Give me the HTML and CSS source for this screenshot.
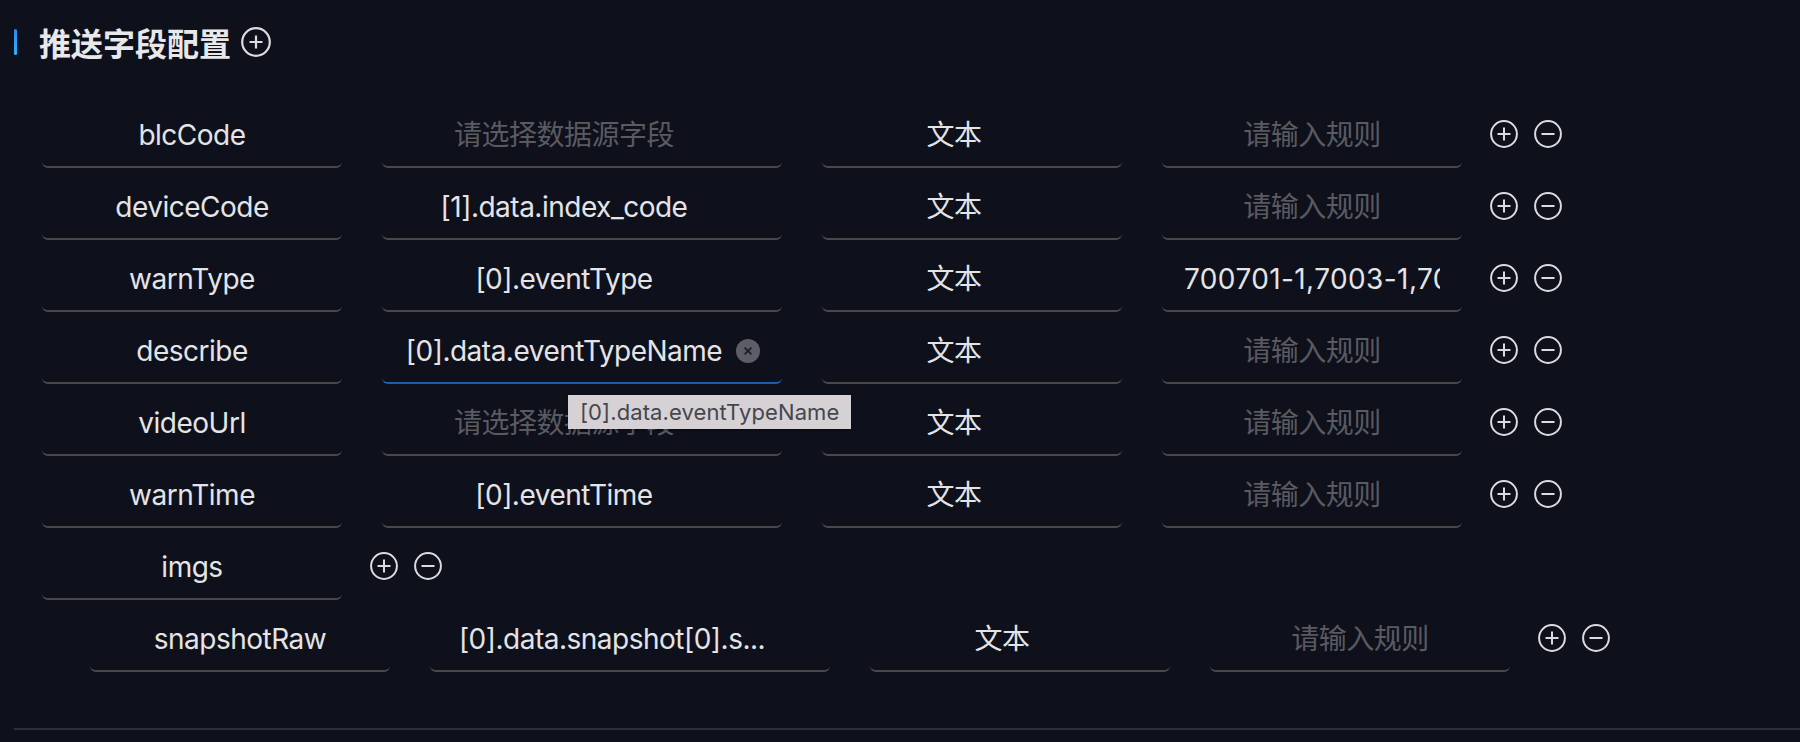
FILE: index.html
```html
<!DOCTYPE html>
<html lang="zh-CN">
<head>
<meta charset="utf-8">
<title>推送字段配置</title>
<link rel="stylesheet" href="styles.css">
</head>
<body>
<div class="page">
  <div class="header">
    <span class="bar"></span>
    <h2 class="title">推送字段配置</h2>
    <svg class="icon icon--title" viewBox="0 0 30 30"><circle cx="15" cy="15" r="13.8" fill="none" stroke="currentColor" stroke-width="2.2"/><path d="M15 8.5v13M8.5 15h13" stroke="currentColor" stroke-width="2.2" fill="none"/></svg>
  </div>

  <div class="rows">
    <div class="row">
      <div class="cell cell--key"><span class="val">blcCode</span></div>
      <div class="cell cell--src cell--suffix"><span class="val ph">请选择数据源字段</span><span class="sfx"></span></div>
      <div class="cell cell--type cell--suffix"><span class="val">文本</span><span class="sfx"></span></div>
      <div class="cell cell--rule"><span class="val ph">请输入规则</span></div>
      <div class="actions">
        <svg class="icon" viewBox="0 0 28 28"><circle cx="14" cy="14" r="12.9" fill="none" stroke="currentColor" stroke-width="2"/><path d="M14 7.5v13M7.5 14h13" stroke="currentColor" stroke-width="2" fill="none"/></svg>
        <svg class="icon" viewBox="0 0 28 28"><circle cx="14" cy="14" r="12.9" fill="none" stroke="currentColor" stroke-width="2"/><path d="M7.5 14h13" stroke="currentColor" stroke-width="2" fill="none"/></svg>
      </div>
    </div>

    <div class="row">
      <div class="cell cell--key"><span class="val">deviceCode</span></div>
      <div class="cell cell--src cell--suffix"><span class="val">[1].data.index_code</span><span class="sfx"></span></div>
      <div class="cell cell--type cell--suffix"><span class="val">文本</span><span class="sfx"></span></div>
      <div class="cell cell--rule"><span class="val ph">请输入规则</span></div>
      <div class="actions">
        <svg class="icon" viewBox="0 0 28 28"><circle cx="14" cy="14" r="12.9" fill="none" stroke="currentColor" stroke-width="2"/><path d="M14 7.5v13M7.5 14h13" stroke="currentColor" stroke-width="2" fill="none"/></svg>
        <svg class="icon" viewBox="0 0 28 28"><circle cx="14" cy="14" r="12.9" fill="none" stroke="currentColor" stroke-width="2"/><path d="M7.5 14h13" stroke="currentColor" stroke-width="2" fill="none"/></svg>
      </div>
    </div>

    <div class="row">
      <div class="cell cell--key"><span class="val">warnType</span></div>
      <div class="cell cell--src cell--suffix"><span class="val">[0].eventType</span><span class="sfx"></span></div>
      <div class="cell cell--type cell--suffix"><span class="val">文本</span><span class="sfx"></span></div>
      <div class="cell cell--rule cell--start"><span class="val">700701-1,7003-1,7003-2</span></div>
      <div class="actions">
        <svg class="icon" viewBox="0 0 28 28"><circle cx="14" cy="14" r="12.9" fill="none" stroke="currentColor" stroke-width="2"/><path d="M14 7.5v13M7.5 14h13" stroke="currentColor" stroke-width="2" fill="none"/></svg>
        <svg class="icon" viewBox="0 0 28 28"><circle cx="14" cy="14" r="12.9" fill="none" stroke="currentColor" stroke-width="2"/><path d="M7.5 14h13" stroke="currentColor" stroke-width="2" fill="none"/></svg>
      </div>
    </div>

    <div class="row">
      <div class="cell cell--key"><span class="val">describe</span></div>
      <div class="cell cell--src cell--suffix cell--active">
        <span class="val">[0].data.eventTypeName</span>
        <span class="sfx"><svg class="clear" viewBox="0 0 24 24"><circle cx="12" cy="12" r="12" fill="#5d5d68"/><path d="M8.6 8.6l6.8 6.8M15.4 8.6l-6.8 6.8" stroke="#1a1b24" stroke-width="1.6" fill="none"/></svg></span>
        <div class="tooltip">[0].data.eventTypeName</div>
      </div>
      <div class="cell cell--type cell--suffix"><span class="val">文本</span><span class="sfx"></span></div>
      <div class="cell cell--rule"><span class="val ph">请输入规则</span></div>
      <div class="actions">
        <svg class="icon" viewBox="0 0 28 28"><circle cx="14" cy="14" r="12.9" fill="none" stroke="currentColor" stroke-width="2"/><path d="M14 7.5v13M7.5 14h13" stroke="currentColor" stroke-width="2" fill="none"/></svg>
        <svg class="icon" viewBox="0 0 28 28"><circle cx="14" cy="14" r="12.9" fill="none" stroke="currentColor" stroke-width="2"/><path d="M7.5 14h13" stroke="currentColor" stroke-width="2" fill="none"/></svg>
      </div>
    </div>

    <div class="row">
      <div class="cell cell--key"><span class="val">videoUrl</span></div>
      <div class="cell cell--src cell--suffix"><span class="val ph">请选择数据源字段</span><span class="sfx"></span></div>
      <div class="cell cell--type cell--suffix"><span class="val">文本</span><span class="sfx"></span></div>
      <div class="cell cell--rule"><span class="val ph">请输入规则</span></div>
      <div class="actions">
        <svg class="icon" viewBox="0 0 28 28"><circle cx="14" cy="14" r="12.9" fill="none" stroke="currentColor" stroke-width="2"/><path d="M14 7.5v13M7.5 14h13" stroke="currentColor" stroke-width="2" fill="none"/></svg>
        <svg class="icon" viewBox="0 0 28 28"><circle cx="14" cy="14" r="12.9" fill="none" stroke="currentColor" stroke-width="2"/><path d="M7.5 14h13" stroke="currentColor" stroke-width="2" fill="none"/></svg>
      </div>
    </div>

    <div class="row">
      <div class="cell cell--key"><span class="val">warnTime</span></div>
      <div class="cell cell--src cell--suffix"><span class="val">[0].eventTime</span><span class="sfx"></span></div>
      <div class="cell cell--type cell--suffix"><span class="val">文本</span><span class="sfx"></span></div>
      <div class="cell cell--rule"><span class="val ph">请输入规则</span></div>
      <div class="actions">
        <svg class="icon" viewBox="0 0 28 28"><circle cx="14" cy="14" r="12.9" fill="none" stroke="currentColor" stroke-width="2"/><path d="M14 7.5v13M7.5 14h13" stroke="currentColor" stroke-width="2" fill="none"/></svg>
        <svg class="icon" viewBox="0 0 28 28"><circle cx="14" cy="14" r="12.9" fill="none" stroke="currentColor" stroke-width="2"/><path d="M7.5 14h13" stroke="currentColor" stroke-width="2" fill="none"/></svg>
      </div>
    </div>

    <div class="row">
      <div class="cell cell--key"><span class="val">imgs</span></div>
      <div class="actions">
        <svg class="icon" viewBox="0 0 28 28"><circle cx="14" cy="14" r="12.9" fill="none" stroke="currentColor" stroke-width="2"/><path d="M14 7.5v13M7.5 14h13" stroke="currentColor" stroke-width="2" fill="none"/></svg>
        <svg class="icon" viewBox="0 0 28 28"><circle cx="14" cy="14" r="12.9" fill="none" stroke="currentColor" stroke-width="2"/><path d="M7.5 14h13" stroke="currentColor" stroke-width="2" fill="none"/></svg>
      </div>
    </div>

    <div class="row row--child">
      <div class="cell cell--key"><span class="val">snapshotRaw</span></div>
      <div class="cell cell--src cell--suffix"><span class="val">[0].data.snapshot[0].s...</span><span class="sfx"></span></div>
      <div class="cell cell--type cell--suffix"><span class="val">文本</span><span class="sfx"></span></div>
      <div class="cell cell--rule"><span class="val ph">请输入规则</span></div>
      <div class="actions">
        <svg class="icon" viewBox="0 0 28 28"><circle cx="14" cy="14" r="12.9" fill="none" stroke="currentColor" stroke-width="2"/><path d="M14 7.5v13M7.5 14h13" stroke="currentColor" stroke-width="2" fill="none"/></svg>
        <svg class="icon" viewBox="0 0 28 28"><circle cx="14" cy="14" r="12.9" fill="none" stroke="currentColor" stroke-width="2"/><path d="M7.5 14h13" stroke="currentColor" stroke-width="2" fill="none"/></svg>
      </div>
    </div>
  </div>

  <div class="divider"></div>
</div>
</body>
</html>
```

FILE: styles.css
```css
* { box-sizing: border-box; }

html, body {
  margin: 0;
  padding: 0;
  background: #0e101b;
}

body {
  font-family: Inter, "Noto Sans CJK SC", sans-serif;
  color: #e4e4e7;
  width: 1800px;
  height: 742px;
  overflow: hidden;
}

.page {
  display: flex;
  flex-direction: column;
}

.header {
  height: 84px;
  display: flex;
  align-items: center;
  padding-left: 14px;
}

.bar {
  width: 3px;
  height: 26px;
  border-radius: 2px;
  background: linear-gradient(#2f86ff, #22b8f5);
}

.title {
  margin: 0 0 0 22px;
  font-size: 32px;
  font-weight: 700;
  color: #e8e8ea;
  line-height: 1;
  font-family: "Noto Sans CJK SC", sans-serif;
}

.icon {
  width: 28px;
  height: 28px;
  color: #dcdcdf;
  flex: none;
}

.icon--title {
  width: 30px;
  height: 30px;
  margin-left: 10px;
}

.rows {
  margin-top: 24px;
  padding-left: 42px;
  display: flex;
  flex-direction: column;
  gap: 12px;
}

.row {
  display: flex;
  align-items: center;
  height: 60px;
}

.row--child {
  padding-left: 48px;
}

.cell {
  position: relative;
  height: 60px;
  display: flex;
  align-items: center;
  justify-content: center;
  padding: 0 22px 4px;
  border-bottom: 2px solid #47474c;
  border-radius: 0 0 6px 6px;
  font-size: 28px;
  letter-spacing: -0.5px;
  margin-right: 40px;
  flex: none;
}

.cell--key { width: 300px; }
.cell--src { width: 400px; }
.cell--type { width: 300px; }
.cell--rule { width: 300px; margin-right: 28px; }

.row > .cell--key:nth-last-child(2) { margin-right: 28px; }

.cell--active {
  border-bottom-color: #1c5dac;
}

.cell--start {
  justify-content: flex-start;
  letter-spacing: 0.4px;
}

.val {
  flex: 1;
  min-width: 0;
  text-align: center;
  white-space: nowrap;
  overflow: hidden;
  line-height: 36px;
}

.cell--start .val {
  text-align: left;
}

.ph {
  color: #5a5a61;
}

.sfx {
  width: 24px;
  height: 24px;
  margin-left: 12px;
  flex: none;
  display: flex;
}

.clear {
  width: 24px;
  height: 24px;
}

.actions {
  display: flex;
  align-items: center;
  gap: 16px;
  margin-bottom: 8px;
}

.tooltip {
  position: absolute;
  left: 186px;
  top: 71px;
  height: 34px;
  padding: 0 12px;
  display: flex;
  align-items: center;
  background: #d5d1d5;
  color: #46464b;
  font-size: 22px;
  letter-spacing: 0.1px;
  white-space: nowrap;
  box-shadow: 0 1px 3px rgba(0, 0, 0, 0.35);
  z-index: 2;
}

.divider {
  margin-top: 56px;
  margin-left: 14px;
  height: 2px;
  background: #2c2e39;
}
```
